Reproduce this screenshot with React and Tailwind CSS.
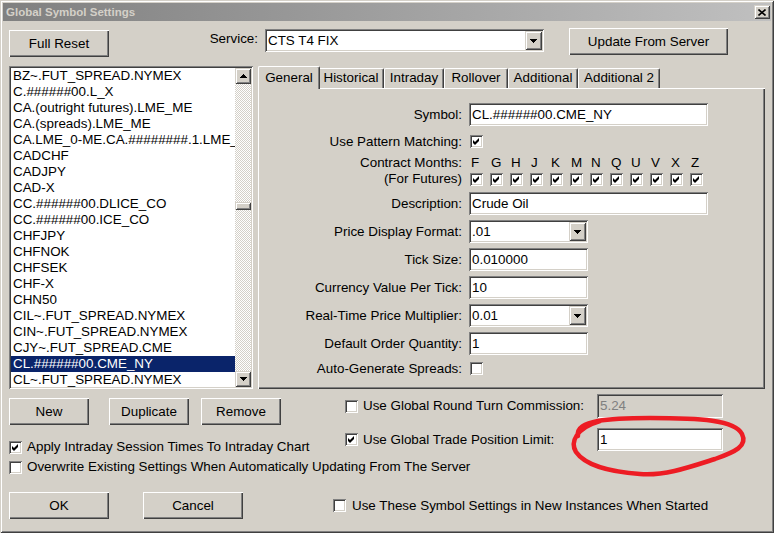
import React from 'react';

const raised = 'shadow-[inset_1px_1px_0_#ffffff,inset_-1px_-1px_0_#404040,inset_-2px_-2px_0_#808080]';
const arrowRaised = 'shadow-[inset_1px_1px_0_#d4d0c8,inset_-1px_-1px_0_#404040,inset_2px_2px_0_#ffffff,inset_-2px_-2px_0_#808080]';
const sunken = 'shadow-[inset_1px_1px_0_#808080,inset_-1px_-1px_0_#ffffff,inset_2px_2px_0_#404040,inset_-2px_-2px_0_#d4d0c8]';

const symbols = [
  'BZ~.FUT_SPREAD.NYMEX',
  'C.######00.L_X',
  'CA.(outright futures).LME_ME',
  'CA.(spreads).LME_ME',
  'CA.LME_0-ME.CA.########.1.LME_ME',
  'CADCHF',
  'CADJPY',
  'CAD-X',
  'CC.######00.DLICE_CO',
  'CC.######00.ICE_CO',
  'CHFJPY',
  'CHFNOK',
  'CHFSEK',
  'CHF-X',
  'CHN50',
  'CIL~.FUT_SPREAD.NYMEX',
  'CIN~.FUT_SPREAD.NYMEX',
  'CJY~.FUT_SPREAD.CME',
  'CL.######00.CME_NY',
  'CL~.FUT_SPREAD.NYMEX',
];

const months = ['F', 'G', 'H', 'J', 'K', 'M', 'N', 'Q', 'U', 'V', 'X', 'Z'];

const tabs = [
  { name: 'General', w: 'w-[62px]', active: true },
  { name: 'Historical', w: 'w-[66px]' },
  { name: 'Intraday', w: 'w-[60px]' },
  { name: 'Rollover', w: 'w-[64px]' },
  { name: 'Additional', w: 'w-[70px]' },
  { name: 'Additional 2', w: 'w-[82px]' },
];

function Button({ children, className = '' }) {
  return (
    <button type="button" className={`flex items-center justify-center bg-[#d4d0c8] ${raised} ${className}`}>
      {children}
    </button>
  );
}

function ArrowBtn({ up, className = '' }) {
  return (
    <div className={`flex items-center justify-center bg-[#d4d0c8] ${arrowRaised} ${className}`}>
      <svg width="7" height="4" viewBox="0 0 7 4" shapeRendering="crispEdges">
        <polygon points={up ? '3.5,0 7,4 0,4' : '0,0 7,0 3.5,4'} fill="#000" />
      </svg>
    </div>
  );
}

function Checkbox({ checked, className = '' }) {
  return (
    <div className={`h-[13px] w-[13px] shrink-0 bg-white ${sunken} ${className}`}>
      {checked && (
        <svg width="13" height="13" viewBox="0 0 13 13">
          <polygon points="3,5 5,7 9,3 9,6 5,10 3,8" fill="#000" />
        </svg>
      )}
    </div>
  );
}

function TextField({ value, className = '', disabled }) {
  return (
    <div
      className={`flex items-center pl-[3px] whitespace-nowrap ${sunken} ${
        disabled ? 'bg-[#d4d0c8] text-[#808080]' : 'bg-white'
      } ${className}`}
    >
      {value}
    </div>
  );
}

function Combo({ value, className = '' }) {
  return (
    <div className={`flex items-center bg-white p-[2px] ${sunken} ${className}`}>
      <div className="flex-1 pl-[1px] whitespace-nowrap">{value}</div>
      <ArrowBtn className="h-full w-[17px]" />
    </div>
  );
}

function FieldRow({ label, children, className = '' }) {
  return (
    <div className={`flex items-center ${className}`}>
      <div className="w-[204px] whitespace-nowrap text-right">{label}</div>
      <div className="ml-[7px] flex">{children}</div>
    </div>
  );
}

export default function App() {
  return (
    <div className="relative h-[533px] w-[774px] overflow-hidden bg-[#d4d0c8] p-[3px] font-['Liberation_Sans',Arial,sans-serif] text-[13.4px] leading-[16px] text-black shadow-[inset_1px_1px_0_#d4d0c8,inset_-1px_-1px_0_#404040,inset_2px_2px_0_#ffffff,inset_-2px_-2px_0_#808080]">
      {/* title bar */}
      <div className="flex h-[18px] items-center justify-between bg-linear-to-r from-[#808080] to-[#c0c0c0] pl-[3px] pr-[1px]">
        <span className="text-[11.5px] font-bold text-[#d4d0c8]">Global Symbol Settings</span>
        <div className={`flex h-[14px] w-[16px] items-center justify-center bg-[#d4d0c8] ${arrowRaised}`}>
          <svg width="8" height="7" viewBox="0 0 8 7">
            <path d="M0.5 0.5 L7.5 6.5 M7.5 0.5 L0.5 6.5" stroke="#000" strokeWidth="1.6" />
          </svg>
        </div>
      </div>

      <div className="px-[6px]">
        {/* top row */}
        <div className="mt-[7px] flex h-[29px] items-start">
          <Button className="mt-[2px] h-[27px] w-[100px]">Full Reset</Button>
          <div className="mt-[3px] w-[149px] text-right">Service:</div>
          <Combo value="CTS T4 FIX" className="ml-[7px] mt-[1px] h-[23px] w-[279px]" />
          <Button className="ml-[25px] h-[27px] w-[159px]">Update From Server</Button>
        </div>

        {/* list + tabs */}
        <div className="mt-[9px] flex h-[323px]">
          <div className={`flex h-[323px] w-[244px] bg-white p-[2px] ${sunken}`}>
            <div className="w-[224px] overflow-hidden">
              {symbols.map((s) => (
                <div
                  key={s}
                  className={`h-[16px] overflow-hidden whitespace-nowrap pl-[2px] ${
                    s === 'CL.######00.CME_NY' ? 'bg-[#0a246a] text-white' : ''
                  }`}
                >
                  {s}
                </div>
              ))}
            </div>
            <div className="flex w-[16px] flex-col bg-[image:conic-gradient(#d4d0c8_25%,#ffffff_0_50%,#d4d0c8_0_75%,#ffffff_0)] bg-[length:2px_2px]">
              <ArrowBtn up className="h-[16px] w-[16px]" />
              <div className="flex-1">
                <div className={`mt-[118px] h-[8px] w-[16px] bg-[#d4d0c8] ${arrowRaised}`} />
              </div>
              <ArrowBtn className="h-[16px] w-[16px]" />
            </div>
          </div>

          <div className="ml-[5px] flex w-[507px] flex-col">
            <div className="flex h-[22px] items-end pl-[2px]">
              {tabs.map((t) => (
                <div
                  key={t.name}
                  className={`flex justify-center rounded-t-[2px] border-t border-l border-r border-white border-r-[#404040] bg-[#d4d0c8] shadow-[inset_-1px_0_0_#808080] whitespace-nowrap ${t.w} ${
                    t.active ? 'relative z-10 -mx-[2px] -mb-[1px] h-[23px] pt-[3px]' : 'h-[20px] pt-[1px]'
                  }`}
                >
                  {t.name}
                </div>
              ))}
            </div>
            <div className="h-[301px] pt-[15px] shadow-[inset_1px_1px_0_#ffffff,inset_-1px_-1px_0_#404040,inset_-2px_-2px_0_#808080]">
              <FieldRow label="Symbol:">
                <TextField value="CL.######00.CME_NY" className="h-[23px] w-[239px]" />
              </FieldRow>
              <FieldRow label="Use Pattern Matching:" className="mt-[9px] h-[13px]">
                <Checkbox checked className="ml-[1px]" />
              </FieldRow>
              <div className="mt-[7px] flex">
                <div className="w-[204px] text-right">
                  <div>Contract Months:</div>
                  <div>(For Futures)</div>
                </div>
                <div className="ml-[8px]">
                  <div className="flex h-[16px]">
                    {months.map((m) => (
                      <div key={m} className="w-[20px] pl-[1px]">{m}</div>
                    ))}
                  </div>
                  <div className="mt-[2px] flex">
                    {months.map((m) => (
                      <div key={m} className="w-[20px]">
                        <Checkbox checked />
                      </div>
                    ))}
                  </div>
                </div>
              </div>
              <FieldRow label="Description:" className="mt-[5px]">
                <TextField value="Crude Oil" className="h-[23px] w-[239px]" />
              </FieldRow>
              <FieldRow label="Price Display Format:" className="mt-[5px]">
                <Combo value=".01" className="h-[23px] w-[119px]" />
              </FieldRow>
              <FieldRow label="Tick Size:" className="mt-[5px]">
                <TextField value="0.010000" className="h-[23px] w-[119px]" />
              </FieldRow>
              <FieldRow label="Currency Value Per Tick:" className="mt-[5px]">
                <TextField value="10" className="h-[23px] w-[119px]" />
              </FieldRow>
              <FieldRow label="Real-Time Price Multiplier:" className="mt-[5px]">
                <Combo value="0.01" className="h-[23px] w-[119px]" />
              </FieldRow>
              <FieldRow label="Default Order Quantity:" className="mt-[5px]">
                <TextField value="1" className="h-[23px] w-[119px]" />
              </FieldRow>
              <FieldRow label="Auto-Generate Spreads:" className="mt-[7px] h-[13px]">
                <Checkbox className="ml-[1px]" />
              </FieldRow>
            </div>
          </div>
        </div>

        {/* lower area */}
        <div className="flex">
          <div className="w-[336px]">
            <div className="mt-[9px] flex h-[27px]">
              <Button className="h-[27px] w-[80px]">New</Button>
              <Button className="ml-[20px] h-[27px] w-[80px]">Duplicate</Button>
              <Button className="ml-[12px] h-[27px] w-[80px]">Remove</Button>
            </div>
            <div className="mt-[14px] flex h-[16px] items-center">
              <Checkbox checked />
              <span className="ml-[5px] whitespace-nowrap">Apply Intraday Session Times To Intraday Chart</span>
            </div>
          </div>
          <div>
            <div className="mt-[5px] flex h-[24px] items-center">
              <Checkbox />
              <span className="ml-[5px] w-[234px] whitespace-nowrap">Use Global Round Turn Commission:</span>
              <TextField value="5.24" disabled className="h-[24px] w-[126px]" />
            </div>
            <div className="mt-[10px] flex h-[23px] items-center">
              <Checkbox checked />
              <span className="ml-[5px] w-[234px] whitespace-nowrap">Use Global Trade Position Limit:</span>
              <TextField value="1" className="h-[23px] w-[126px]" />
            </div>
          </div>
        </div>
        <div className="mt-[4px] flex h-[16px] items-center">
          <Checkbox />
          <span className="ml-[5px] whitespace-nowrap">
            Overwrite Existing Settings When Automatically Updating From The Server
          </span>
        </div>
        <div className="mt-[17px] flex h-[27px] items-center">
          <Button className="h-[27px] w-[100px]">OK</Button>
          <Button className="ml-[34px] h-[27px] w-[100px]">Cancel</Button>
          <Checkbox className="ml-[90px]" />
          <span className="ml-[6px] whitespace-nowrap">Use These Symbol Settings in New Instances When Started</span>
        </div>
      </div>

      {/* hand-drawn red mark */}
      <svg className="pointer-events-none absolute inset-0" width="774" height="533" viewBox="0 0 774 533">
        <path
          d="M578 436 C575 420 610 418 650 418 C700 418 735 420 742 434 C748 446 735 452 715 459 C690 467 665 476 640 474 C610 472 585 465 576 452 C570 442 576 428 600 421"
          fill="none"
          stroke="#ed1c24"
          strokeWidth="4.5"
          strokeLinecap="round"
        />
      </svg>
    </div>
  );
}
